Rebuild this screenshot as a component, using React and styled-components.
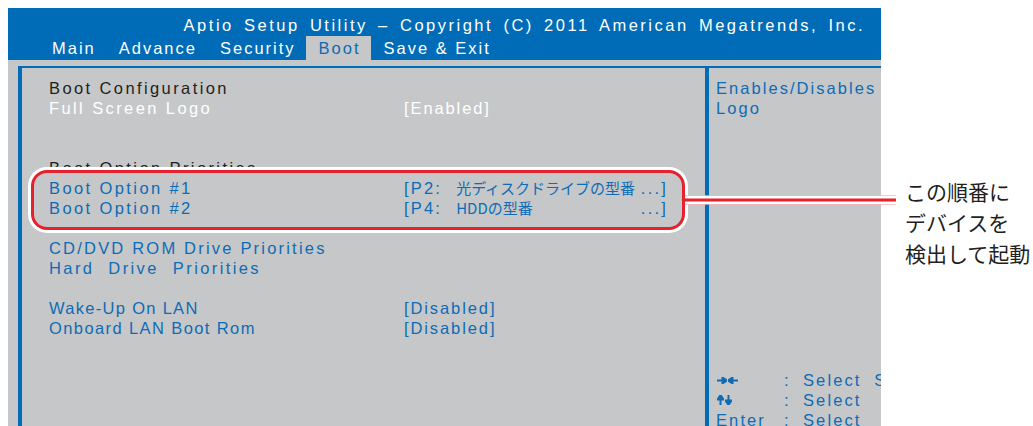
import React from 'react';
import styled, { createGlobalStyle } from 'styled-components';

const BLUE = '#006cb7';
const TEXT_BLUE = '#0d6cb5';
const GREY = '#c6c7c9';
const RED = '#e6202c';
const INK = '#231f20';

const GlobalStyle = createGlobalStyle`
  html, body {
    margin: 0;
    padding: 0;
    background: #fff;
    overflow: hidden;
  }
  body {
    font-family: "Liberation Sans", Arial, sans-serif;
  }
`;

const Page = styled.div`
  display: flex;
  align-items: flex-start;
  padding: 8px 0 0 8px;
  height: 426px;
  box-sizing: border-box;
`;

const Screen = styled.div`
  flex: none;
  width: 873px;
  height: 440px;
  display: flex;
  flex-direction: column;
`;

const Header = styled.header`
  background: ${BLUE};
  padding-top: 6px;
  color: #fff;
  font-size: 16.5px;
  white-space: nowrap;
`;

const Title = styled.div`
  line-height: 22px;
  text-align: right;
  padding-right: 16px;
  letter-spacing: 2.5px;
  word-spacing: 3.2px;
`;

const TabBar = styled.nav`
  display: flex;
  padding-left: 31px;
  height: 24px;
  letter-spacing: 2px;
`;

const Tab = styled.div`
  padding: 0 10px 0 13px;
  line-height: 24px;
  background: ${(p) => (p.$active ? GREY : 'transparent')};
  color: ${(p) => (p.$active ? TEXT_BLUE : '#fff')};
`;

const Body = styled.div`
  flex: 1;
  display: flex;
  background: ${GREY};
  padding: 6px 0 0 10px;
`;

const Frame = styled.div`
  flex: 1;
  display: grid;
  grid-template-columns: 683px 4px 1fr;
  border-top: 2px solid ${BLUE};
  border-left: 4px solid ${BLUE};
`;

const Main = styled.section`
  padding: 10px 0 0 27px;
`;

const Divider = styled.div`
  background: ${BLUE};
`;

const Help = styled.aside`
  padding: 10px 0 0 7px;
  display: flex;
  flex-direction: column;
  overflow: hidden;
`;

const toneColor = { ink: INK, white: '#fff', blue: TEXT_BLUE };

const Row = styled.div`
  display: grid;
  grid-template-columns: 355px 1fr;
  height: 20px;
  line-height: 20px;
  font-size: 16.5px;
  white-space: nowrap;
  color: ${(p) => toneColor[p.$tone || 'blue']};
`;

const Label = styled.span`
  letter-spacing: ${(p) => p.$ls ?? 2.4}px;
  word-spacing: ${(p) => p.$ws ?? 0}px;
`;

const Setting = styled.span`
  display: flex;
  justify-content: space-between;
  letter-spacing: ${(p) => p.$ls ?? 2.2}px;
`;

const Jp = styled.span`
  font-family: "Noto Sans CJK JP", sans-serif;
  font-size: 15px;
  letter-spacing: 0;
  margin-left: 14px;
`;

const PriorityBox = styled.div`
  position: relative;
  margin: -8px 20px -12px -18px;
  padding: 5px 14px 9px 15px;
  border: 3px solid ${RED};
  border-radius: 16px;
  background: ${GREY};
  box-shadow: 0 0 0 3px #fff;

  &::after {
    content: '';
    position: absolute;
    left: calc(100% + 3px);
    top: 50%;
    transform: translateY(-50%);
    width: 211px;
    height: 3px;
    background: ${RED};
    border-top: 3px solid #fff;
    border-bottom: 3px solid #fff;
  }
`;

const HelpText = styled.div`
  font-size: 16.5px;
  line-height: 20px;
  letter-spacing: 2.05px;
  color: ${TEXT_BLUE};
  white-space: nowrap;
`;

const Keys = styled.div`
  margin-top: 252px;
  display: grid;
  grid-template-columns: 68px 19px auto;
  grid-auto-rows: 20px;
  align-items: center;
  font-size: 16.5px;
  line-height: 20px;
  letter-spacing: 2.1px;
  word-spacing: 6px;
  color: ${TEXT_BLUE};
  white-space: nowrap;
`;

const KeyGlyph = styled.span`
  display: flex;
  align-items: center;
  gap: 1px;
  padding-left: 1px;
`;

const Callout = styled.p`
  margin: 168px 0 0 24px;
  font-family: "Noto Sans CJK JP", sans-serif;
  font-size: 21px;
  line-height: 31px;
  color: ${INK};
  white-space: nowrap;
`;

function Arrow({ dir }) {
  const shapes = {
    right: { w: 10, h: 7, d: 'M0 3.5h6M5.5 0.6l4.5 2.9-4.5 2.9z' },
    left: { w: 10, h: 7, d: 'M10 3.5h-6M4.5 0.6l-4.5 2.9 4.5 2.9z' },
    up: { w: 7, h: 10, d: 'M3.5 10V4M0.6 4.5l2.9-4.5 2.9 4.5z' },
    down: { w: 7, h: 10, d: 'M3.5 0v6M0.6 5.5l2.9 4.5 2.9-4.5z' },
  };
  const s = shapes[dir];
  return (
    <svg width={s.w} height={s.h} viewBox={`0 0 ${s.w} ${s.h}`}>
      <path d={s.d} stroke={TEXT_BLUE} strokeWidth="2" fill={TEXT_BLUE} />
    </svg>
  );
}

const tabs = ['Main', 'Advance', 'Security', 'Boot', 'Save & Exit'];

function App() {
  return (
    <>
      <GlobalStyle />
      <Page>
        <Screen>
          <Header>
            <Title>Aptio Setup Utility – Copyright (C) 2011 American Megatrends, Inc.</Title>
            <TabBar>
              {tabs.map((t) => (
                <Tab key={t} $active={t === 'Boot'}>{t}</Tab>
              ))}
            </TabBar>
          </Header>
          <Body>
            <Frame>
              <Main>
                <Row $tone="ink"><Label>Boot Configuration</Label></Row>
                <Row $tone="white">
                  <Label>Full Screen Logo</Label>
                  <Setting $ls={1.9}>[Enabled]</Setting>
                </Row>
                <Row />
                <Row />
                <Row $tone="ink"><Label>Boot Option Priorities</Label></Row>
                <PriorityBox>
                  <Row>
                    <Label>Boot Option #1</Label>
                    <Setting>
                      <span>[P2:<Jp>光ディスクドライブの型番</Jp></span>
                      <span>...]</span>
                    </Setting>
                  </Row>
                  <Row>
                    <Label>Boot Option #2</Label>
                    <Setting>
                      <span>[P4:<Jp>HDDの型番</Jp></span>
                      <span>...]</span>
                    </Setting>
                  </Row>
                </PriorityBox>
                <Row />
                <Row><Label $ls={2.2}>CD/DVD ROM Drive Priorities</Label></Row>
                <Row><Label $ls={2.4} $ws={7}>Hard Drive Priorities</Label></Row>
                <Row />
                <Row>
                  <Label $ls={1.3}>Wake-Up On LAN</Label>
                  <Setting $ls={1.9}>[Disabled]</Setting>
                </Row>
                <Row>
                  <Label $ls={1.4}>Onboard LAN Boot Rom</Label>
                  <Setting $ls={1.9}>[Disabled]</Setting>
                </Row>
              </Main>
              <Divider />
              <Help>
                <HelpText>Enables/Disables</HelpText>
                <HelpText>Logo</HelpText>
                <Keys>
                  <KeyGlyph><Arrow dir="right" /><Arrow dir="left" /></KeyGlyph>
                  <span>:</span>
                  <span>Select Screen</span>
                  <KeyGlyph><Arrow dir="up" /><Arrow dir="down" /></KeyGlyph>
                  <span>:</span>
                  <span>Select</span>
                  <span>Enter</span>
                  <span>:</span>
                  <span>Select</span>
                </Keys>
              </Help>
            </Frame>
          </Body>
        </Screen>
        <Callout>
          この順番に
          <br />
          デバイスを
          <br />
          検出して起動
        </Callout>
      </Page>
    </>
  );
}

export default App;
